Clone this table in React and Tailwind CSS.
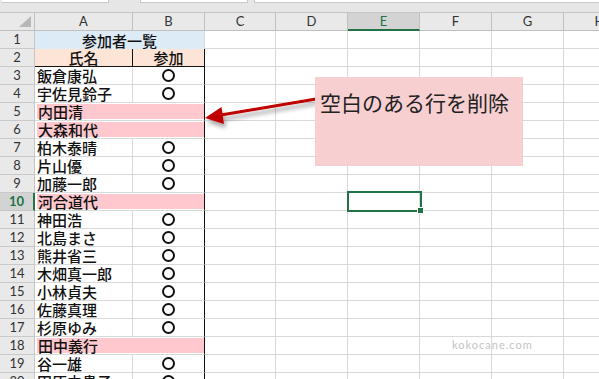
import React from "react";

const JP = "font-['Noto_Sans_CJK_JP',sans-serif]";
const LAT = "font-['Lato','Liberation_Sans',sans-serif]";

const rest = [
  { l: "C", w: "w-[71px]" },
  { l: "D", w: "w-[72px]" },
  { l: "E", w: "w-[72px]", sel: true },
  { l: "F", w: "w-[72px]" },
  { l: "G", w: "w-[72px]" },
  { l: "H", w: "w-[72px]" },
];

const rows = [
  ["飯倉康弘", true],
  ["宇佐見鈴子", true],
  ["内田清", false],
  ["大森和代", false],
  ["柏木泰晴", true],
  ["片山優", true],
  ["加藤一郎", true],
  ["河合道代", false],
  ["神田浩", true],
  ["北島まさ", true],
  ["熊井省三", true],
  ["木畑真一郎", true],
  ["小林貞夫", true],
  ["佐藤真理", true],
  ["杉原ゆみ", true],
  ["田中義行", false],
  ["谷一雄", true],
  ["田原由貴子", true],
];

function Circle() {
  return (
    <span className="inline-block w-[13px] h-[13px] mt-[2px] rounded-full border-2 border-[#111]" />
  );
}

function RowHead({ n, sel }) {
  return (
    <div
      className={
        "w-[35px] shrink-0 flex items-center justify-center text-[13px] leading-none border-b " +
        LAT +
        (sel
          ? " bg-[#d3d3d3] text-[#217346] font-bold border-r-2 border-r-[#217346] border-b-[#c6c6c6]"
          : " bg-[#e9e9e9] text-[#333] border-r border-r-[#c6c6c6] border-b-[#c9c9c9]")
      }
    >
      {n}
    </div>
  );
}

function RestCells() {
  return rest.map((c) => (
    <div key={c.l} className={c.w + " shrink-0 border-r border-b border-[#d9d9d9]"} />
  ));
}

export default function App() {
  return (
    <div className={"relative w-[599px] h-[379px] overflow-hidden bg-white " + JP}>
      {/* top strip */}
      <div className="h-[13px] bg-[#e6e6e6] flex items-start gap-[31px] border-b border-[#c6c6c6]">
        <div className="flex w-[107px] h-[3px] bg-white border-b border-r border-[#c8c8c8] ml-[2px]" />
        <div className="flex gap-[6px] flex-1">
          <div className="w-[108px] h-[3px] bg-white border-b border-x border-[#c8c8c8]" />
          <div className="flex-1 h-[3px] bg-white border-b border-l border-[#c8c8c8]" />
        </div>
      </div>

      {/* column header */}
      <div className={"flex h-[18px] text-[13px] text-[#333] " + LAT}>
        <div className="w-[35px] shrink-0 bg-[#e9e9e9] border-r border-b border-[#c0c0c0] flex items-center justify-end pr-[3px]">
          <svg width="12" height="11" viewBox="0 0 12 11">
            <polygon points="12,0 12,11 0,11" fill="#b7b7b7" />
          </svg>
        </div>
        <div className="w-[98px] shrink-0 bg-[#e9e9e9] border-r border-b border-[#c0c0c0] flex items-center justify-center">A</div>
        <div className="w-[72px] shrink-0 bg-[#e9e9e9] border-r border-b border-[#c0c0c0] flex items-center justify-center">B</div>
        {rest.map((c) => (
          <div
            key={c.l}
            className={
              c.w +
              " shrink-0 flex items-center justify-center border-r border-r-[#c0c0c0] " +
              (c.sel
                ? "bg-[#d3d3d3] text-[#217346] border-b-2 border-b-[#217346] pt-[1px]"
                : "bg-[#e9e9e9] border-b border-b-[#c0c0c0]")
            }
          >
            {c.l}
          </div>
        ))}
      </div>

      {/* row 1 */}
      <div className="flex h-[18px]">
        <RowHead n={1} />
        <div className="w-[170px] shrink-0 bg-[#ddebf7] border-r border-r-[#d9d9d9] flex items-center justify-center text-[15px] leading-[17px] font-medium text-[#111]">
          参加者一覧
        </div>
        <RestCells />
      </div>

      {/* row 2 */}
      <div className="flex h-[18px]">
        <RowHead n={2} />
        <div className="w-[98px] shrink-0 bg-[#fce4d6] border-r border-b border-[#111] flex items-center justify-center text-[15px] leading-[17px] font-medium text-[#111]">
          氏名
        </div>
        <div className="w-[72px] shrink-0 bg-[#fce4d6] border-r border-b border-[#111] flex items-center justify-center text-[15px] leading-[17px] font-medium text-[#111]">
          参加
        </div>
        <RestCells />
      </div>

      {rows.map(([name, ok], i) => {
        const n = i + 3;
        return (
          <div key={n} className="flex h-[18px]">
            <RowHead n={n} sel={n === 10} />
            {ok ? (
              <>
                <div className="w-[98px] shrink-0 border-r border-b border-[#d9d9d9] pl-[2px] text-[15px] leading-[17px] font-medium text-[#111] whitespace-nowrap">
                  {name}
                </div>
                <div className="w-[72px] shrink-0 border-b border-b-[#d9d9d9] border-r border-r-[#111] flex justify-center">
                  <Circle />
                </div>
              </>
            ) : (
              <div className="w-[170px] shrink-0 border-b border-b-[#d9d9d9] border-r border-r-[#111] pl-[2px] pt-[1px]">
                <div className="h-[15px] bg-[#ffc7ce] pl-[1px] text-[15px] leading-[15px] font-medium text-[#111] whitespace-nowrap">
                  {name}
                </div>
              </div>
            )}
            <RestCells />
          </div>
        );
      })}

      {/* selection E10 */}
      <div className="absolute left-[347px] top-[191px] w-[75px] h-[21px] border-2 border-[#217346]" />
      <div className="absolute left-[417px] top-[207px] w-[7px] h-[7px] bg-[#217346] border border-white" />

      {/* arrow */}
      <svg className="absolute left-0 top-0" width="599" height="379" viewBox="0 0 599 379">
        <defs>
          <filter id="sh" x="-20%" y="-50%" width="140%" height="200%">
            <feDropShadow dx="2" dy="4" stdDeviation="2" floodColor="#000" floodOpacity="0.35" />
          </filter>
        </defs>
        <g filter="url(#sh)">
          <line x1="316" y1="99" x2="218" y2="115.5" stroke="#c00000" strokeWidth="3" />
          <polygon points="205,118 221.5,107 224,124" fill="#c00000" />
        </g>
      </svg>

      {/* callout */}
      <div className="absolute left-[315px] top-[77px] w-[208px] h-[89px] bg-[#f8cfd1] pl-[5px] pt-[11px] text-[21px] leading-[28px] text-[#222]">
        空白のある行を削除
      </div>

      {/* watermark */}
      <div className={"absolute left-[452px] top-[339px] text-[11px] leading-[12px] tracking-[1px] text-[#c4c4c4] " + LAT}>
        kokocane.com
      </div>
    </div>
  );
}
